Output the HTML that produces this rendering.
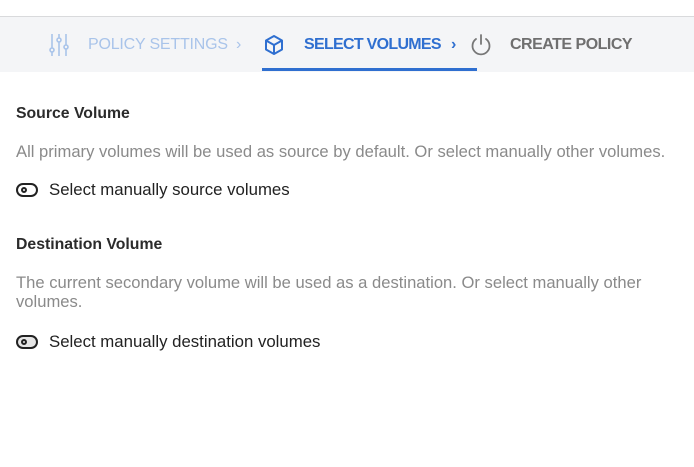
<!DOCTYPE html>
<html><head><style>
body{margin:0;width:694px;height:467px;background:#fff;font-family:"Liberation Sans",sans-serif;overflow:hidden;position:relative}
.hdr{position:absolute;top:16px;left:0;width:694px;height:55px;background:#f4f5f7;border-top:1px solid #d9dadc}
.t{position:absolute;font-size:16px;white-space:nowrap;letter-spacing:-0.2px}
.ul{position:absolute;left:262px;top:68px;width:215px;height:3px;background:#2f6fd0}
h{position:absolute;font-weight:bold;font-size:15.8px;color:#2b2b2b;left:16px}
p{position:absolute;margin:0;left:16px;font-size:16.6px;color:#8a8a8a;line-height:19px;width:650px}
.lb{position:absolute;left:49px;font-size:16.8px;color:#222}
.tg{position:absolute;left:16px;width:18px;height:10px;border:2.5px solid #222;border-radius:8px}
.tg:after{content:"";position:absolute;left:3px;top:2px;border:2px solid #222;border-radius:50%;box-sizing:content-box;width:2px;height:2px}
</style></head><body>
<div class="hdr"></div>
<svg style="position:absolute;left:48px;top:33px" width="22" height="24" viewBox="0 0 22 24" fill="none" stroke="#a9c4ea" stroke-width="1.6"><line x1="4" y1="1" x2="4" y2="23"/><line x1="11" y1="1" x2="11" y2="23"/><line x1="18" y1="1" x2="18" y2="23"/><circle cx="4" cy="17" r="2" fill="#f4f5f7"/><circle cx="11" cy="7" r="2" fill="#f4f5f7"/><circle cx="18" cy="14" r="2" fill="#f4f5f7"/></svg>
<div class="t" style="left:88px;top:36px;color:#a9c4ea">POLICY SETTINGS</div>
<div class="t" style="left:236px;top:36px;color:#a9c4ea">›</div>
<svg style="position:absolute;left:264px;top:34px" width="20" height="22" viewBox="0 0 20 22" fill="none" stroke="#2f6fd0" stroke-width="2" stroke-linejoin="round"><path d="M10 2L18 6.5V15.5L10 20L2 15.5V6.5Z"/><path d="M2 6.5L10 11L18 6.5M10 11V20"/></svg>
<div class="t" style="left:304px;top:36px;color:#2f6fd0;font-weight:bold;letter-spacing:-0.7px">SELECT VOLUMES</div>
<div class="t" style="left:451px;top:36px;color:#2f6fd0;font-weight:bold">›</div>
<svg style="position:absolute;left:469px;top:33px" width="24" height="24" viewBox="0 0 24 24" fill="none" stroke="#777" stroke-width="1.8" stroke-linecap="round"><path d="M7 6A8.5 8.5 0 1 0 17 6"/><line x1="12" y1="2" x2="12" y2="11"/></svg>
<div class="t" style="left:510px;top:36px;color:#6f6f6f;font-weight:bold;letter-spacing:-0.5px">CREATE POLICY</div>
<div class="ul"></div>
<h style="top:105px">Source Volume</h>
<p style="top:142px">All primary volumes will be used as source by default. Or select manually other volumes.</p>
<div class="tg" style="top:183px"></div>
<div class="lb" style="top:180px">Select manually source volumes</div>
<h style="top:236px">Destination Volume</h>
<p style="top:273px">The current secondary volume will be used as a destination. Or select manually other volumes.</p>
<div class="tg" style="top:335px;background:#e6e6e6"></div>
<div class="lb" style="top:332px">Select manually destination volumes</div>
</body></html>
